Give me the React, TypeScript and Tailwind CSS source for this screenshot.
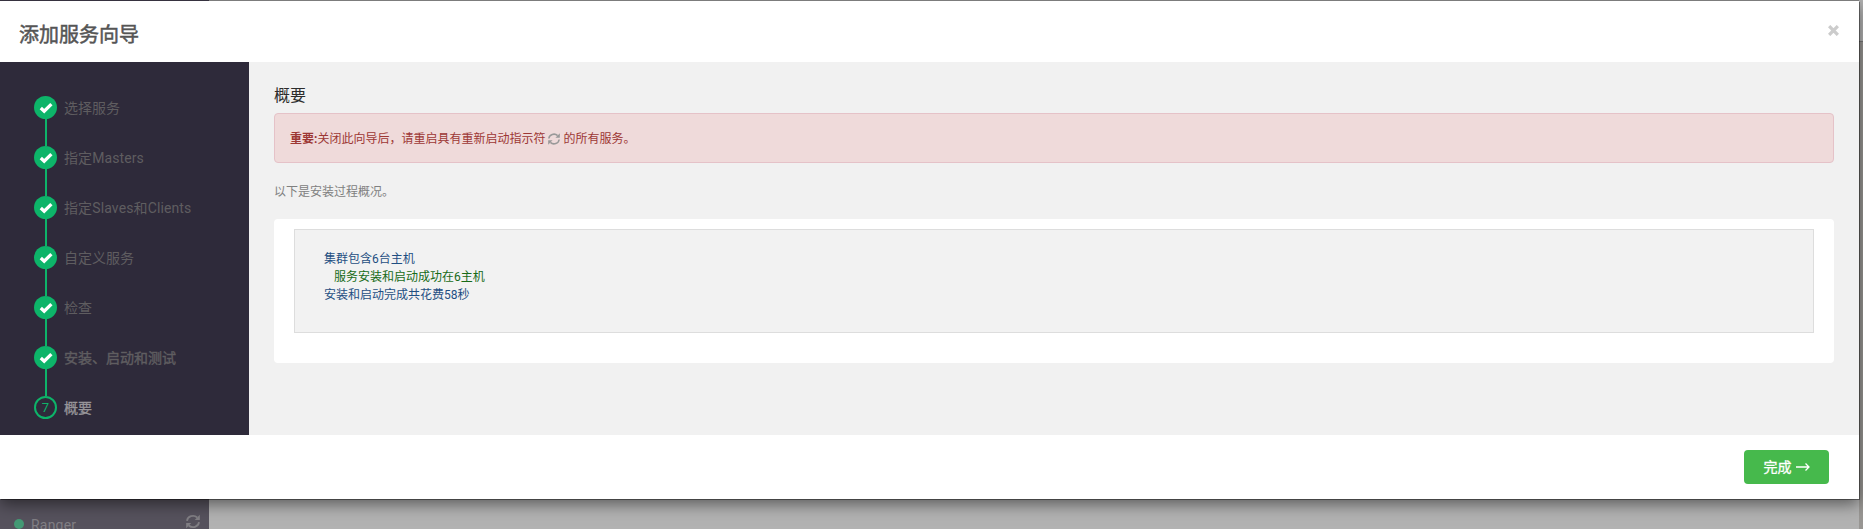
const STEPS = [
  { label: '选择服务', style: '' },
  { label: '指定Masters', style: 'tracking-[0.1px]' },
  { label: '指定Slaves和Clients', style: 'tracking-[0.12px]' },
  { label: '自定义服务', style: '' },
  { label: '检查', style: '' },
  { label: '安装、启动和测试', style: '[-webkit-text-stroke:0.4px]' },
];

function Refresh({ className }: { className: string }) {
  return (
    <svg viewBox="0 0 14 14" className={className} fill="none">
      <path d="M1 6.4A6 5.6 0 0 1 11.2 3" stroke="currentColor" strokeWidth="1.8" />
      <path d="M13.8 0.3V5.4H8.7Z" fill="currentColor" />
      <path d="M13 7.6A6 5.6 0 0 1 2.8 11" stroke="currentColor" strokeWidth="1.8" />
      <path d="M0.2 13.7V8.6H5.3Z" fill="currentColor" />
    </svg>
  );
}

function Check() {
  return (
    <svg viewBox="0 0 14 12" className="h-3 w-3.5">
      <path d="M1.8 6 5.2 9.2 12.4 2.1" fill="none" stroke="#fff" strokeWidth="3.3" />
    </svg>
  );
}

export default function App() {
  return (
    <div className="relative h-[529px] w-full overflow-hidden bg-[#b2b2b2] font-[Roboto,'Noto_Sans_CJK_SC',sans-serif] text-xs">
      <div className="flex h-full">
        <div className="flex w-[209px] flex-col justify-end bg-[#56525d]">
          <div className="flex h-[20px] items-start pl-[14px] pr-[9px] text-[#817f84]">
            <span className="mt-[9px] h-[10px] w-[10px] shrink-0 translate-y-[1px] rounded-full bg-[#449a75]" />
            <span className="ml-[7px] mt-[6px] flex-1 text-sm leading-5 tracking-[0.2px]">Ranger</span>
            <Refresh className="mt-[5px] h-[15px] w-[14px]" />
          </div>
        </div>
        <div className="flex-1" />
        <div className="mt-[41px] w-1 border-t border-[#777] bg-[#989693]" />
      </div>

      <div className="absolute left-0 top-px flex h-[498px] w-[1859px] flex-col bg-white shadow-[1px_1px_0_0_rgba(0,0,0,0.4),0_5px_15px_rgba(0,0,0,0.5)]">
        <div className="absolute inset-x-0 -top-px flex h-px">
          <div className="w-[209px] bg-[#36323f]" />
          <div className="flex-1 bg-[#7c7c7c]" />
        </div>
        <header className="flex h-[61px] shrink-0 justify-between pl-[19px] pr-[20px]">
          <h1 className="mt-[20px] text-[20px] leading-7 text-[#555] [-webkit-text-stroke:0.5px]">添加服务向导</h1>
          <svg viewBox="0 0 10 10" className="mt-[24px] h-[11px] w-[11px]">
            <path d="M1 1 9 9M9 1 1 9" stroke="#ccc" strokeWidth="3" />
          </svg>
        </header>

        <div className="flex h-[373px] shrink-0">
          <nav className="w-[249px] shrink-0 bg-[#2e2a3a] pl-[34px] pt-[34px]">
            {STEPS.map((s) => (
              <div key={s.label} className="flex h-[50px]">
                <div className="flex w-[23px] flex-col items-center">
                  <span className="flex h-[23px] w-[23px] shrink-0 items-center justify-center rounded-full bg-[#0db469]">
                    <Check />
                  </span>
                  <span className="ml-px w-[2px] flex-1 bg-[#0db469]" />
                </div>
                <span className={`ml-[7px] mt-[2px] text-sm leading-5 text-[#5f5d60] ${s.style}`}>{s.label}</span>
              </div>
            ))}
            <div className="flex">
              <span className="flex h-[23px] w-[23px] items-center justify-center rounded-full border-2 border-[#0db469] text-[13px] text-[#0db469]">
                7
              </span>
              <span className="ml-[7px] mt-[2px] text-sm leading-5 text-[#979599] [-webkit-text-stroke:0.3px]">概要</span>
            </div>
          </nav>

          <main className="flex-1 bg-[#f1f1f1] px-[25px] pt-[22px]">
            <h2 className="h-[29px] text-base leading-6 text-[#2c2c2c]">概要</h2>
            <div className="flex h-[50px] items-center rounded border border-[#e5c2c8] bg-[#efdada] pl-[15px] pt-[2px] text-[#9d3734]">
              <b>重要:</b>
              <span>关闭此向导后，请重启具有重新启动指示符</span>
              <Refresh className="mx-[3px] h-3 w-3 text-[#999]" />
              <span>的所有服务。</span>
            </div>
            <p className="mt-[20px] leading-[18px] text-[#808080]">以下是安装过程概况。</p>
            <section className="mt-[18px] h-[144px] rounded bg-white px-5 pt-[10px]">
              <div className="h-[104px] border border-[#ddd] bg-[#f2f2f2] pl-[29px] pt-[20px] leading-[18px] text-[#1f4f82]">
                <p>集群包含6台主机</p>
                <p className="pl-[10px] text-[#186b18]">服务安装和启动成功在6主机</p>
                <p>安装和启动完成共花费58秒</p>
              </div>
            </section>
          </main>
        </div>

        <footer className="flex flex-1 justify-end pr-[30px] pt-[15px]">
          <button className="flex h-[34px] w-[85px] items-center justify-center gap-1 rounded bg-[#46b94c] text-sm text-white [-webkit-text-stroke:0.3px]">
            完成
            <svg viewBox="0 0 14 10" className="h-[10px] w-[14px]" fill="none" stroke="#fff" strokeWidth="1.3">
              <path d="M0 5H13M9.5 1.5 13 5 9.5 8.5" />
            </svg>
          </button>
        </footer>
      </div>
    </div>
  );
}
